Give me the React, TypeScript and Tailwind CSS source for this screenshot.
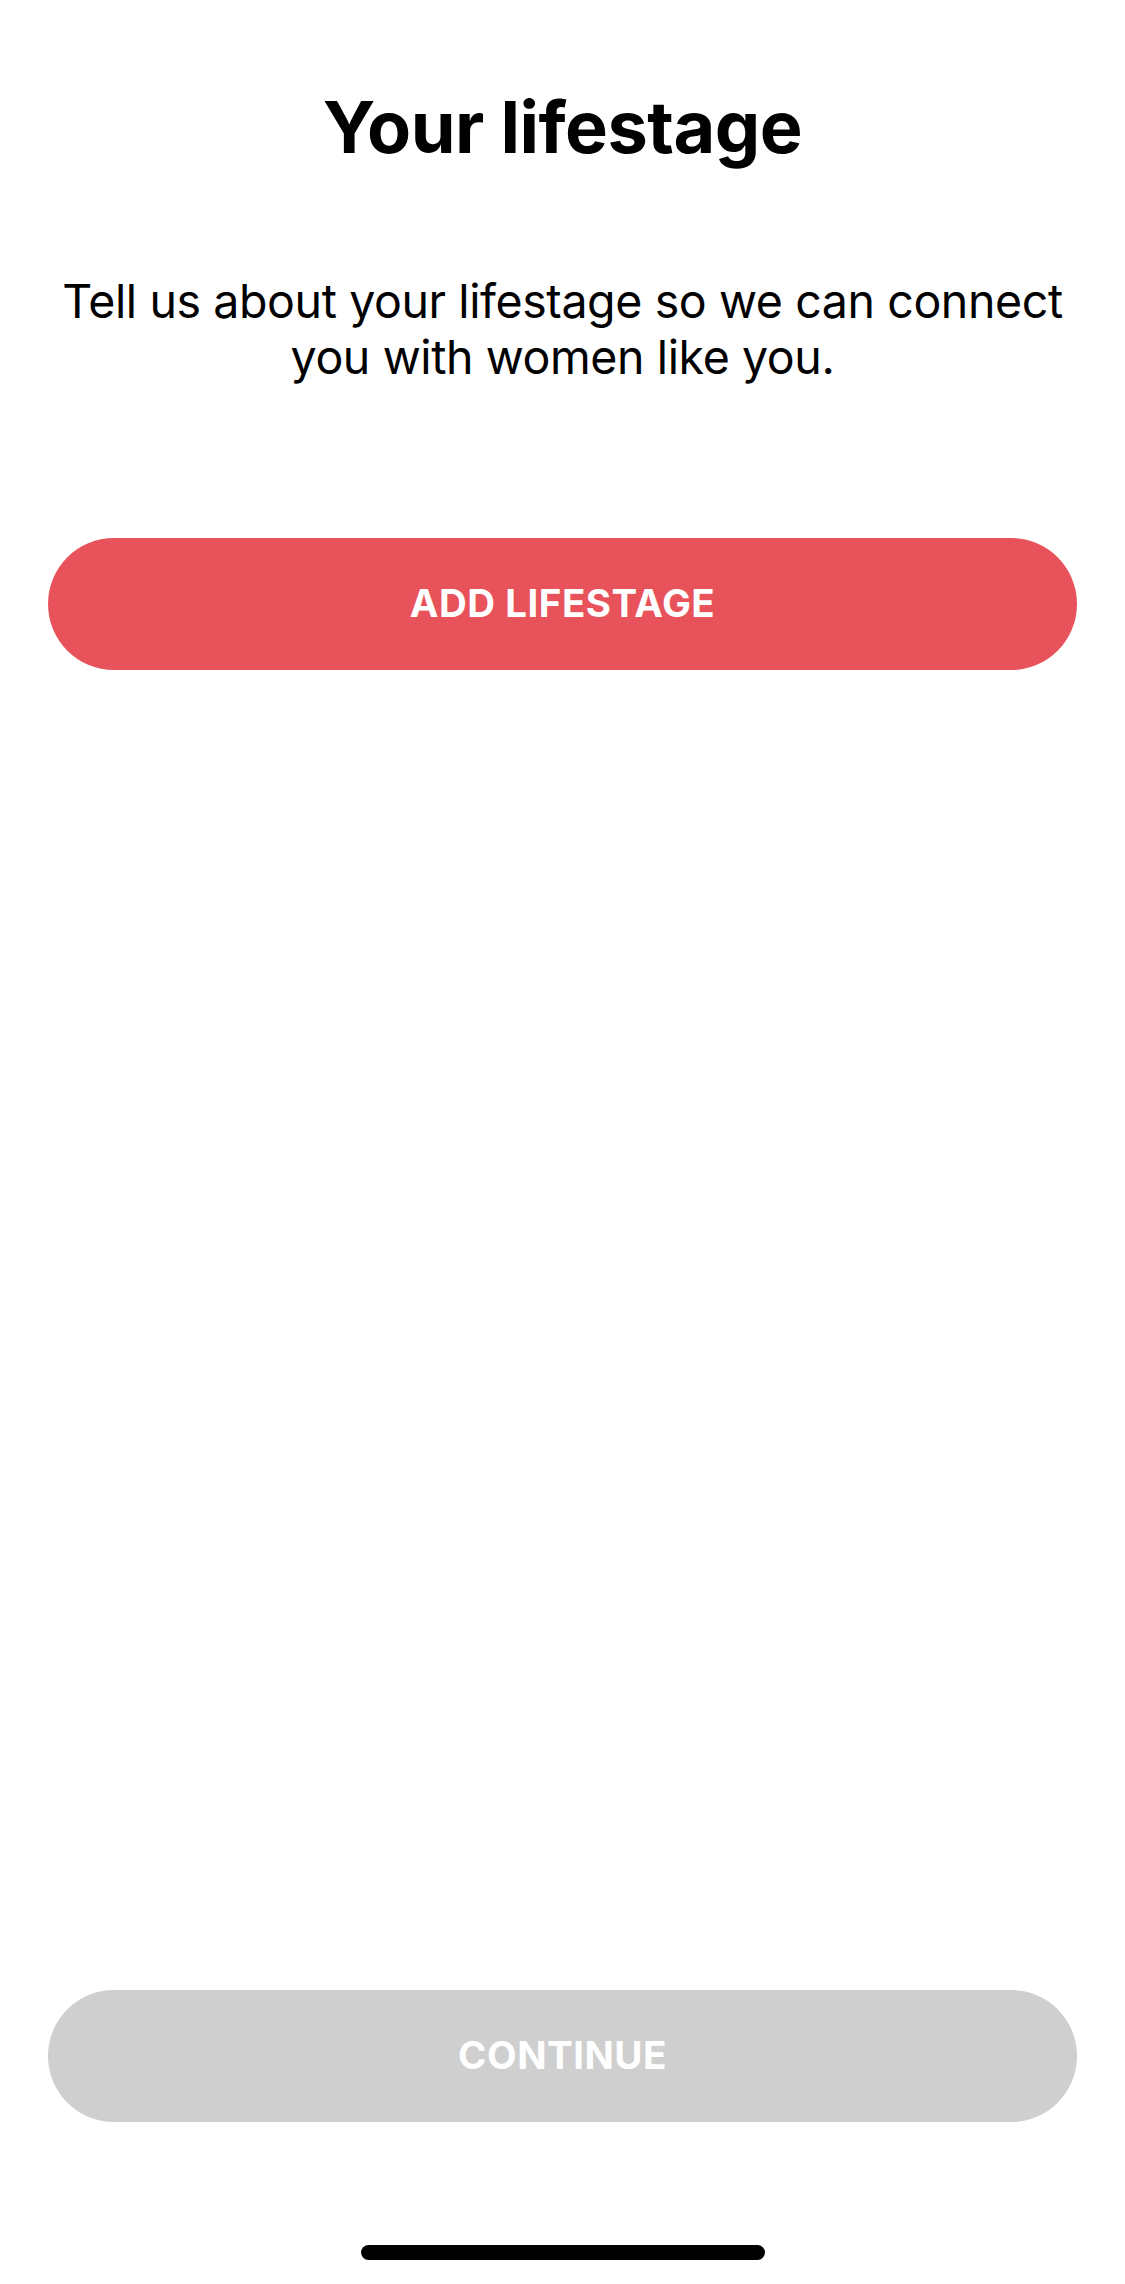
import React from "react";

export default function App() {
  return (
    <div
      className="w-[1125px] h-[2284px] bg-white flex flex-col items-center text-black"
      style={{ fontFamily: "Inter, 'Noto Sans', sans-serif" }}
    >
      <h1 className="mt-[91px] text-[72px] leading-none font-bold tracking-[-0.5px]">Your lifestage</h1>
      <p className="mt-[110px] text-[46.5px] leading-[56px] text-center px-[40px] tracking-[-0.4px] whitespace-nowrap">
        Tell us about your lifestage so we can connect
        <br />
        you with women like you.
      </p>
      <button className="mt-[153px] w-[1029px] h-[132px] rounded-full bg-[#E8525A] text-white text-[38.5px] font-bold tracking-[0.5px]">
        ADD LIFESTAGE
      </button>
      <div className="flex-1" />
      <button className="w-[1029px] h-[132px] rounded-full bg-[#CFCFCF] text-white text-[38.5px] font-bold tracking-[0.5px]">
        CONTINUE
      </button>
      <div className="mt-[123px] mb-[24px] w-[404px] h-[15px] rounded-full bg-black" />
    </div>
  );
}
